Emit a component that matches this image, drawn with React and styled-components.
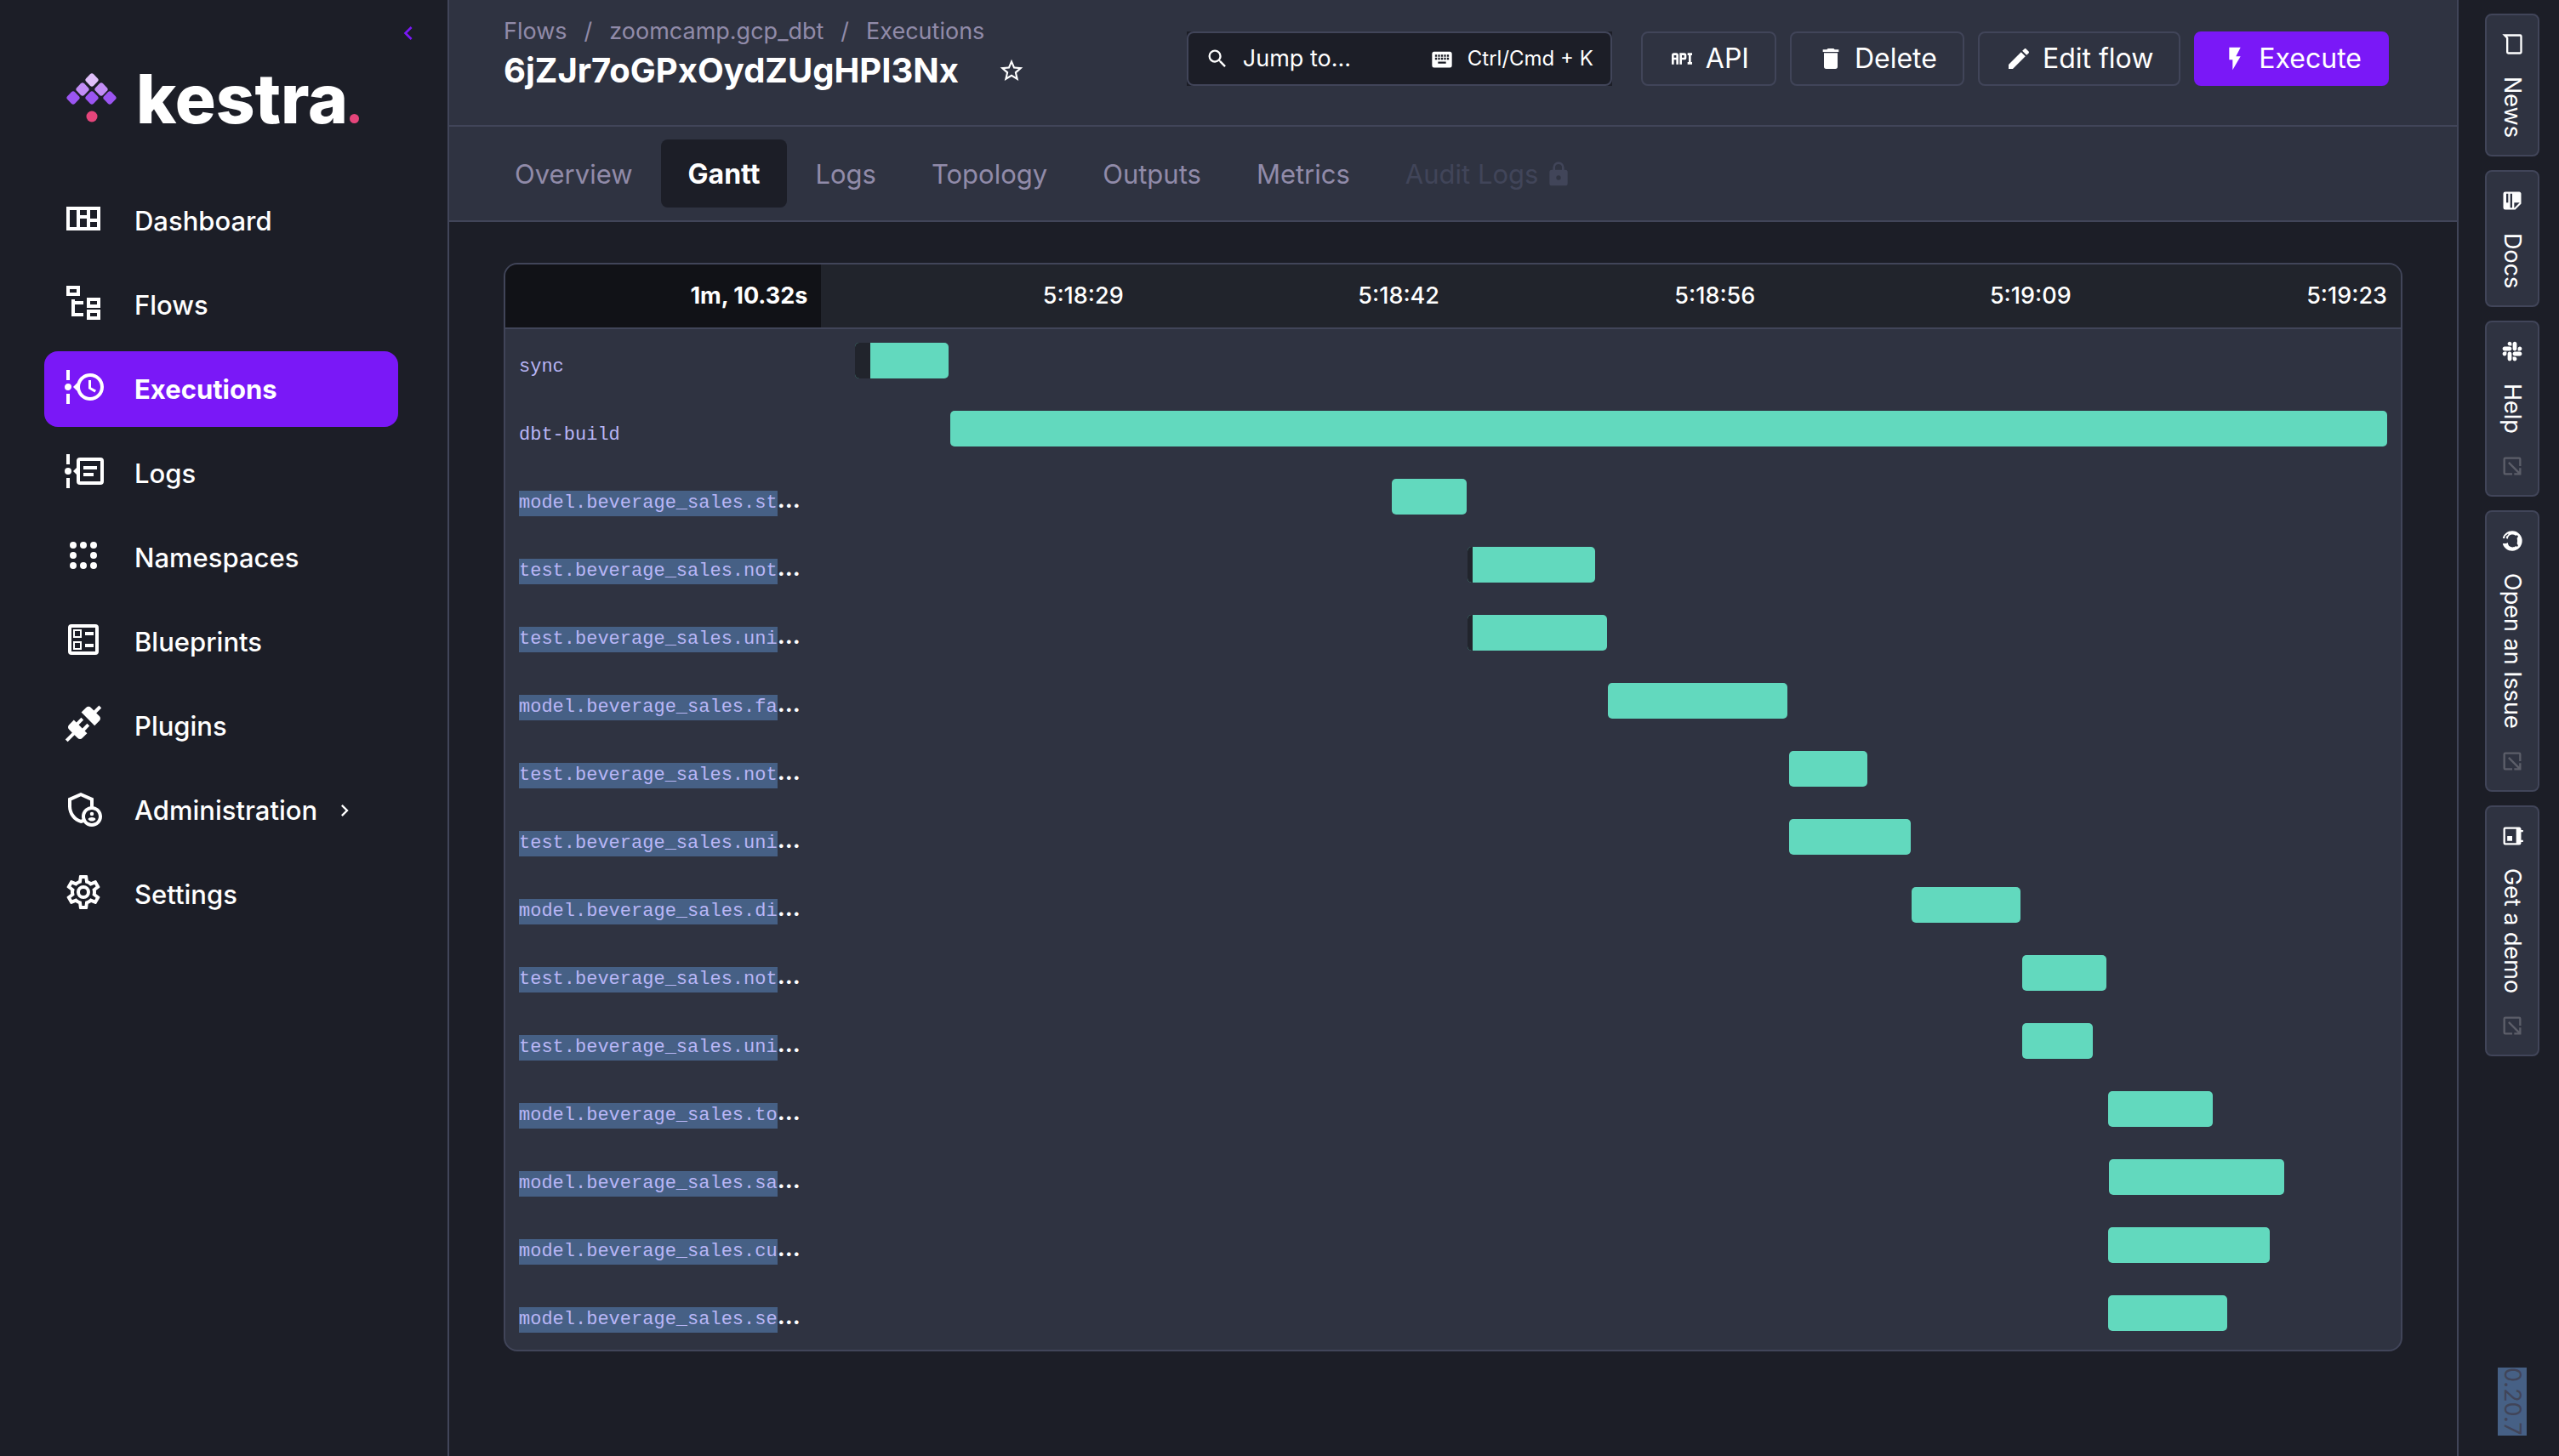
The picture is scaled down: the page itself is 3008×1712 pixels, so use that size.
import React from "react";
import styled, { createGlobalStyle, css } from "styled-components";
import { MdOutlineAdminPanelSettings } from "react-icons/md";
import { FaSlack } from "react-icons/fa";

const color = {
  page: "#1c1e27",
  panel: "#2f3341",
  border: "#414559",
  muted: "#918ba9",
  text: "#ffffff",
  primary: "#7a18f7",
  success: "#62d9be",
  pending: "#21242c",
  headFirst: "#111217",
  code: "#b9b6f6",
  selection: "#466085",
  faint: "#5c5e69",
};

const GlobalStyle = createGlobalStyle`
  *, *::before, *::after { box-sizing: border-box; }
  body {
    margin: 0;
    background: ${color.page};
    color: ${color.text};
    font-family: Inter, "Liberation Sans", sans-serif;
    font-size: 27px;
  }
  a { color: inherit; text-decoration: none; }
  button, input { font-family: inherit; }
`;

/* ---------- icons ---------- */

const paths = {
  dashboard:
    "M2 5H22V19H2V5M4 7V17H8V7H4M10 7V10H14V7H10M10 12V17H14V12H10M16 7V12H20V7H16M16 14V17H20V14H16Z",
  flows:
    "M12 13H7v5h5v2H5V10h2v1h5v2M8 4v2H4V4h4m2-2H2v6h8V2m10 9v2h-4v-2h4m2-2h-8v6h8V9m-2 9v2h-4v-2h4m2-2h-8v6h8v-6z",
  executions:
    "M4 2v6H2V2h2M2 22v-6h2v6H2m3-10c0 1.11-.89 2-2 2a2 2 0 0 1-2-2c0-1.11.89-2 2-2a2 2 0 0 1 2 2m11-8c4.42 0 8 3.58 8 8s-3.58 8-8 8c-3.6 0-6.65-2.38-7.65-5.65L6 12l2.35-2.35C9.35 6.38 12.4 4 16 4m0 2c-3.31 0-6 2.69-6 6s2.69 6 6 6 6-2.69 6-6-2.69-6-6-6m-1 2h1.5v4.2l3 1.7-.8 1.3L15 13V8z",
  logs:
    "M4 2v6H2V2h2M2 22v-6h2v6H2m3-10a2 2 0 0 1-2 2 2 2 0 0 1-2-2 2 2 0 0 1 2-2 2 2 0 0 1 2 2m17-8H10a2 2 0 0 0-2 2v4l-2 2 2 2v4a2 2 0 0 0 2 2h12a2 2 0 0 0 2-2V6a2 2 0 0 0-2-2m0 14H10V6h12v12M12 9h8v2h-8V9m0 4h6v2h-6v-2z",
  namespaces:
    "M6 4a2 2 0 1 0 0 4 2 2 0 0 0 0-4m6 0a2 2 0 1 0 0 4 2 2 0 0 0 0-4m6 0a2 2 0 1 0 0 4 2 2 0 0 0 0-4M6 10a2 2 0 1 0 0 4 2 2 0 0 0 0-4m12 0a2 2 0 1 0 0 4 2 2 0 0 0 0-4M6 16a2 2 0 1 0 0 4 2 2 0 0 0 0-4m6 0a2 2 0 1 0 0 4 2 2 0 0 0 0-4m6 0a2 2 0 1 0 0 4 2 2 0 0 0 0-4z",
  blueprints:
    "M13 7.5h5v2h-5v-2m0 7h5v2h-5v-2M19 3H5a2 2 0 0 0-2 2v14a2 2 0 0 0 2 2h14a2 2 0 0 0 2-2V5a2 2 0 0 0-2-2m0 16H5V5h14v14M11 6H6v5h5V6m-1 4H7V7h3v3m1 3H6v5h5v-5m-1 4H7v-3h3v3z",
  plugins:
    "M21.4 7.5c.8.8.8 2.1 0 2.8l-2.8 2.8-7.8-7.8 2.8-2.8c.8-.8 2.1-.8 2.8 0l1.8 1.8 3-3 1.4 1.4-3 3 1.8 1.8m-5.8 5.8l-1.4-1.4-2.8 2.8-2.1-2.1 2.8-2.8-1.4-1.4-2.8 2.8-1.5-1.4-2.8 2.8c-.8.8-.8 2.1 0 2.8l1.8 1.8-4 4 1.4 1.4 4-4 1.8 1.8c.8.8 2.1.8 2.8 0l2.8-2.8-1.4-1.4 2.8-2.9z",
  settings:
    "M12 8a4 4 0 0 1 4 4 4 4 0 0 1-4 4 4 4 0 0 1-4-4 4 4 0 0 1 4-4m0 2a2 2 0 0 0-2 2 2 2 0 0 0 2 2 2 2 0 0 0 2-2 2 2 0 0 0-2-2m-2 12c-.25 0-.46-.18-.5-.42l-.37-2.65c-.63-.25-1.17-.59-1.69-.99l-2.49 1.01c-.22.08-.49 0-.61-.22l-2-3.46a.493.493 0 0 1 .12-.64l2.11-1.66L4.5 12l.07-1-2.11-1.63a.493.493 0 0 1-.12-.64l2-3.46c.12-.22.39-.31.61-.22l2.49 1c.52-.39 1.06-.73 1.69-.98l.37-2.65c.04-.24.25-.42.5-.42h4c.25 0 .46.18.5.42l.37 2.65c.63.25 1.17.59 1.69.98l2.49-1c.22-.09.49 0 .61.22l2 3.46c.13.22.07.49-.12.64L19.43 11l.07 1-.07 1 2.11 1.63c.19.15.25.42.12.64l-2 3.46c-.12.22-.39.31-.61.22l-2.49-1c-.52.39-1.06.73-1.69.98l-.37 2.65c-.04.24-.25.42-.5.42h-4m1.25-18l-.37 2.61c-1.2.25-2.26.89-3.03 1.78L5.44 7.35l-.75 1.3L6.8 10.2a5.55 5.55 0 0 0 0 3.6l-2.12 1.56.75 1.3 2.43-1.04c.77.88 1.82 1.52 3.01 1.76l.37 2.62h1.52l.37-2.61c1.19-.25 2.24-.89 3.01-1.77l2.43 1.04.75-1.3-2.12-1.55c.4-1.17.4-2.44 0-3.61l2.11-1.55-.75-1.3-2.41 1.04a5.42 5.42 0 0 0-3.03-1.77L12.75 4h-1.5z",
  chevronLeft: "M15.41 16.58L10.83 12l4.58-4.59L14 6l-6 6 6 6 1.41-1.42z",
  chevronRight: "M8.59 16.58L13.17 12 8.59 7.41 10 6l6 6-6 6-1.41-1.42z",
  api:
    "M7 7H5a2 2 0 0 0-2 2v8h2v-4h2v4h2V9a2 2 0 0 0-2-2m0 4H5V9h2m7-2h-4v10h2v-4h2a2 2 0 0 0 2-2V9a2 2 0 0 0-2-2m0 4h-2V9h2m6 0v6h1v2h-4v-2h1V9h-1V7h4v2h-1z",
  trash:
    "M19 4h-3.5l-1-1h-5l-1 1H5v2h14M6 19a2 2 0 0 0 2 2h8a2 2 0 0 0 2-2V7H6v12z",
  pencil:
    "M20.71 7.04c.39-.39.39-1.04 0-1.41l-2.34-2.34c-.37-.39-1.02-.39-1.41 0l-1.84 1.83 3.75 3.75M3 17.25V21h3.75L17.81 9.93l-3.75-3.75L3 17.25z",
  flash: "M7 2v11h3v9l7-12h-4l4-8H7z",
  star:
    "M12 15.39l-3.76 2.27.99-4.28-3.32-2.88 4.38-.37L12 6.09l1.71 4.04 4.38.37-3.32 2.88.99 4.28M22 9.24l-7.19-.61L12 2 9.19 8.63 2 9.24l5.45 4.73L5.82 21 12 17.27 18.18 21l-1.64-7.03L22 9.24z",
  lock:
    "M12 17a2 2 0 0 0 2-2 2 2 0 0 0-2-2 2 2 0 0 0-2 2 2 2 0 0 0 2 2m6-9a2 2 0 0 1 2 2v10a2 2 0 0 1-2 2H6a2 2 0 0 1-2-2V10a2 2 0 0 1 2-2h1V6a5 5 0 0 1 5-5 5 5 0 0 1 5 5v2h1m-6-5a3 3 0 0 0-3 3v2h6V6a3 3 0 0 0-3-3z",
  magnify:
    "M9.5 3A6.5 6.5 0 0 1 16 9.5c0 1.61-.59 3.09-1.56 4.23l.27.27h.79l5 5-1.5 1.5-5-5v-.79l-.27-.27A6.516 6.516 0 0 1 9.5 16 6.5 6.5 0 0 1 3 9.5 6.5 6.5 0 0 1 9.5 3m0 2C7 5 5 7 5 9.5S7 14 9.5 14 14 12 14 9.5 12 5 9.5 5z",
  keyboard:
    "M19 10h-2V8h2m0 5h-2v-2h2m-3-1h-2V8h2m0 5h-2v-2h2m0 6H8v-2h8m-9-5H5V8h2m0 5H5v-2h2m1 0h2v2H8m0-5h2v2H8m3 1h2v2h-2m0-5h2v2h-2m9-5H4c-1.11 0-2 .89-2 2v12a2 2 0 0 0 2 2h16a2 2 0 0 0 2-2V7c0-1.11-.9-2-2-2z",
  message:
    "M20 2H4a2 2 0 0 0-2 2v18l4-4h14a2 2 0 0 0 2-2V4a2 2 0 0 0-2-2m0 14H5.17L4 17.17V4h16v12z",
  note:
    "M14 10h5.5L14 4.5V10M5 3h10l6 6v10a2 2 0 0 1-2 2H5a2 2 0 0 1-2-2V5c0-1.11.89-2 2-2m0 9v2h14v-2H5m0 4v2h9v-2H5z",
  github:
    "M12 2A10 10 0 0 0 2 12c0 4.42 2.87 8.17 6.84 9.5.5.08.66-.23.66-.5v-1.69c-2.77.6-3.36-1.34-3.36-1.34-.46-1.16-1.11-1.47-1.11-1.47-.91-.62.07-.6.07-.6 1 .07 1.53 1.03 1.53 1.03.87 1.52 2.34 1.07 2.91.83.09-.65.35-1.09.63-1.34-2.22-.25-4.55-1.11-4.55-4.92 0-1.11.38-2 1.03-2.71-.1-.25-.45-1.29.1-2.64 0 0 .84-.27 2.75 1.02.79-.22 1.65-.33 2.5-.33.85 0 1.71.11 2.5.33 1.91-1.29 2.75-1.02 2.75-1.02.55 1.35.2 2.39.1 2.64.65.71 1.03 1.6 1.03 2.71 0 3.82-2.34 4.66-4.57 4.91.36.31.69.92.69 1.85V21c0 .27.16.59.67.5C19.14 20.16 22 16.42 22 12A10 10 0 0 0 12 2z",
  calendar:
    "M19 19H5V8h14m-3-7v2H8V1H6v2H5c-1.11 0-2 .89-2 2v14a2 2 0 0 0 2 2h14a2 2 0 0 0 2-2V5a2 2 0 0 0-2-2h-1V1m-1 11h-5v5h5v-5z",
  openInNew:
    "M14 3v2h3.59l-9.83 9.83 1.41 1.41L19 6.41V10h2V3m-2 16H5V5h7V3H5a2 2 0 0 0-2 2v14a2 2 0 0 0 2 2h14a2 2 0 0 0 2-2v-7h-2v7z",
};

const Svg = styled.svg`
  display: block;
  flex: none;
  width: ${(p) => p.$size}px;
  height: ${(p) => p.$size}px;
  fill: currentColor;
`;

const Icon = ({ name, size = 32 }) => (
  <Svg viewBox="0 0 24 24" $size={size} aria-hidden="true">
    <path fillRule="evenodd" d={paths[name]} />
  </Svg>
);

/* ---------- shell ---------- */

const Shell = styled.div`
  display: grid;
  grid-template-columns: 528px minmax(0, 1fr) 120px;
  min-height: 100vh;
`;

const Sidebar = styled.aside`
  border-right: 2px solid ${color.border};
`;

const CollapseRow = styled.div`
  display: flex;
  justify-content: flex-end;
  padding: 23px 30px 0 0;
`;

const IconButton = styled.button`
  display: flex;
  padding: 0;
  border: 0;
  background: none;
  color: ${(p) => p.$color || color.text};
  cursor: pointer;
`;

const Brand = styled.a`
  display: flex;
  align-items: center;
  gap: 22px;
  height: 88px;
  margin: 17px 0 55px 78px;
`;

const Mark = styled.svg`
  display: block;
  width: 60px;
  height: 60px;
`;

const Wordmark = styled.span`
  display: flex;
  align-items: baseline;
  gap: 2px;
  font-size: 80px;
  font-weight: 800;
  line-height: 88px;
`;

const BrandDot = styled.i`
  width: 11px;
  height: 11px;
  border-radius: 50%;
  background: #e5457b;
`;

const diamonds = [
  [30, 8, "#e0c0fa"],
  [19, 19, "#c28df6"],
  [41, 19, "#c28df6"],
  [8, 29, "#9b55f1"],
  [30, 29, "#9b55f1"],
  [51, 29, "#9b55f1"],
];

const Logo = () => (
  <Brand href="#dashboard" aria-label="kestra">
    <Mark viewBox="0 0 60 60" aria-hidden="true">
      {diamonds.map(([x, y, fill]) => (
        <rect
          key={`${x}-${y}`}
          x={x - 6.2}
          y={y - 6.2}
          width="12.4"
          height="12.4"
          rx="3"
          fill={fill}
          transform={`rotate(45 ${x} ${y})`}
        />
      ))}
      <circle cx="30" cy="51" r="6.5" fill="#e5457b" />
    </Mark>
    <Wordmark>
      kestra
      <BrandDot />
    </Wordmark>
  </Brand>
);

const Nav = styled.nav`
  display: flex;
  flex-direction: column;
  gap: 10px;
  padding: 0 58px 0 52px;
`;

const NavLink = styled.a`
  display: flex;
  align-items: center;
  height: 89px;
  padding: 0 22px;
  border-radius: 16px;
  font-size: 31px;
  font-weight: 500;
  line-height: 40px;
  ${(p) =>
    p.$active &&
    css`
      background: ${color.primary};
      font-weight: 700;
    `}
`;

const NavIcon = styled.span`
  margin: 0 36px 5px 0;
`;

const NavChevron = styled.span`
  margin-left: 18px;
`;

const navItems = [
  { label: "Dashboard", icon: "dashboard" },
  { label: "Flows", icon: "flows" },
  { label: "Executions", icon: "executions", active: true },
  { label: "Logs", icon: "logs" },
  { label: "Namespaces", icon: "namespaces" },
  { label: "Blueprints", icon: "blueprints" },
  { label: "Plugins", icon: "plugins" },
  { label: "Administration", admin: true, expandable: true },
  { label: "Settings", icon: "settings" },
];

/* ---------- header ---------- */

const Main = styled.main`
  min-width: 0;
`;

const Header = styled.header`
  display: flex;
  justify-content: space-between;
  gap: 32px;
  height: 149px;
  padding: 17px 80px 0 64px;
  background: ${color.panel};
  border-bottom: 2px solid ${color.border};
`;

const Crumbs = styled.nav`
  display: flex;
  gap: 20px;
  color: ${color.muted};
  font-size: 27px;
  line-height: 40px;
`;

const TitleRow = styled.div`
  display: flex;
  align-items: center;
  gap: 46px;
`;

const Title = styled.h1`
  margin: 0;
  font-size: 40px;
  font-weight: 700;
  line-height: 52px;
`;

const Actions = styled.div`
  display: flex;
  gap: 16px;
  height: 64px;
  margin-top: 20px;
`;

const SearchBox = styled.label`
  width: 500px;
  margin-right: 18px;
  background: ${color.page};
`;

const SearchInner = styled.span`
  display: flex;
  align-items: center;
  gap: 16px;
  height: 64px;
  padding: 0 20px;
  border: 2px solid ${color.border};
  border-radius: 8px;
`;

const SearchInput = styled.input`
  flex: 1;
  min-width: 0;
  padding: 0;
  border: 0;
  outline: 0;
  background: none;
  color: ${color.text};
  font-size: 27px;
  line-height: 40px;
  &::placeholder {
    color: ${color.text};
    opacity: 1;
  }
`;

const Shortcut = styled.span`
  font-size: 24px;
  line-height: 40px;
`;

const ActionButton = styled.button`
  display: flex;
  align-items: center;
  gap: 12px;
  height: 64px;
  padding: 0 30px;
  border: 2px solid ${(p) => (p.$primary ? color.primary : color.border)};
  border-radius: 8px;
  background: ${(p) => (p.$primary ? color.primary : color.panel)};
  color: ${color.text};
  font-size: 32px;
  line-height: 40px;
  cursor: pointer;
`;

const Tabs = styled.nav`
  display: flex;
  align-items: center;
  gap: 1px;
  height: 112px;
  padding-left: 45px;
  background: ${color.panel};
  border-bottom: 2px solid ${color.border};
`;

const Tab = styled.a`
  display: flex;
  align-items: center;
  gap: 8px;
  height: 80px;
  padding: 2px 32px 0;
  border-radius: 8px;
  color: ${(p) => (p.$disabled ? color.border : color.muted)};
  font-size: 31px;
  line-height: 40px;
  ${(p) =>
    p.$active &&
    css`
      background: ${color.page};
      color: ${color.text};
      font-size: 32px;
      font-weight: 700;
    `}
`;

/* ---------- gantt ---------- */

const Content = styled.section`
  padding: 48px 64px;
`;

const Card = styled.div`
  overflow: hidden;
  border: 2px solid ${color.border};
  border-radius: 16px;
  background: ${color.panel};
`;

const Table = styled.table`
  width: 100%;
  table-layout: fixed;
  border-spacing: 0;
`;

const HeadCell = styled.th`
  height: 76px;
  padding: 0 16px;
  background: ${(p) => (p.$first ? color.headFirst : color.pending)};
  border-bottom: 2px solid ${color.border};
  font-size: 27px;
  font-weight: ${(p) => (p.$first ? 700 : 500)};
  line-height: 40px;
  text-align: right;
`;

const TaskCell = styled.th`
  height: 80px;
  padding: 26px 0 0 16px;
  vertical-align: top;
  font-size: 27px;
  font-weight: 700;
  line-height: 30px;
  text-align: left;
  white-space: nowrap;
`;

const TaskName = styled.code`
  display: inline-block;
  height: 30px;
  background: ${(p) => (p.$selected ? color.selection : "none")};
  color: ${color.code};
  font-family: "Liberation Mono", "DejaVu Sans Mono", monospace;
  font-size: 22px;
  font-weight: 400;
  line-height: 30px;
`;

const TrackCell = styled.td`
  padding: 16px 16px 0;
  vertical-align: top;
`;

const Bar = styled.div`
  display: flex;
  height: 42px;
  overflow: hidden;
  border-radius: 5px;
  background: ${color.success};
`;

const Pending = styled.span`
  background: ${color.pending};
`;

const ticks = ["5:18:29", "5:18:42", "5:18:56", "5:19:09", "5:19:23"];

/* start and end are shares of the time line, pending is a share of the bar */
const tasks = [
  { name: "sync", start: 1.3, end: 7.33, pending: 16.4 },
  { name: "dbt-build", start: 7.42, end: 100 },
  { name: "model.beverage_sales.st", cut: true, start: 35.88, end: 40.7 },
  { name: "test.beverage_sales.not", cut: true, start: 40.76, end: 48.98, pending: 4 },
  { name: "test.beverage_sales.uni", cut: true, start: 40.76, end: 49.75, pending: 3.7 },
  { name: "model.beverage_sales.fa", cut: true, start: 49.79, end: 61.36 },
  { name: "test.beverage_sales.not", cut: true, start: 61.45, end: 66.51 },
  { name: "test.beverage_sales.uni", cut: true, start: 61.45, end: 69.31 },
  { name: "model.beverage_sales.di", cut: true, start: 69.36, end: 76.38 },
  { name: "test.beverage_sales.not", cut: true, start: 76.48, end: 81.91 },
  { name: "test.beverage_sales.uni", cut: true, start: 76.48, end: 81.04 },
  { name: "model.beverage_sales.to", cut: true, start: 82, end: 88.77 },
  { name: "model.beverage_sales.sa", cut: true, start: 82.07, end: 93.37 },
  { name: "model.beverage_sales.cu", cut: true, start: 82.02, end: 92.44 },
  { name: "model.beverage_sales.se", cut: true, start: 82.02, end: 89.7 },
];

const Gantt = () => (
  <Card>
    <Table>
      <thead>
        <tr>
          <HeadCell $first scope="col">1m, 10.32s</HeadCell>
          {ticks.map((t) => (
            <HeadCell key={t} scope="col">{t}</HeadCell>
          ))}
        </tr>
      </thead>
      <tbody>
        {tasks.map((task, i) => (
          <tr key={i}>
            <TaskCell scope="row">
              <TaskName $selected={task.cut}>{task.name}</TaskName>
              {task.cut && "..."}
            </TaskCell>
            <TrackCell colSpan={ticks.length}>
              <Bar
                style={{
                  marginLeft: `${task.start}%`,
                  width: `${task.end - task.start}%`,
                }}
              >
                {task.pending && <Pending style={{ width: `${task.pending}%` }} />}
              </Bar>
            </TrackCell>
          </tr>
        ))}
      </tbody>
    </Table>
  </Card>
);

/* ---------- right rail ---------- */

const Rail = styled.aside`
  display: flex;
  flex-direction: column;
  align-items: center;
  gap: 16px;
  padding: 16px 0 24px 8px;
  border-left: 2px solid ${color.border};
`;

const RailButton = styled.button`
  display: flex;
  align-items: center;
  gap: 24px;
  width: 64px;
  padding: 20px 0;
  border: 2px solid ${color.border};
  border-radius: 8px;
  background: ${color.panel};
  color: ${color.text};
  font-size: 27px;
  line-height: 34px;
  writing-mode: vertical-rl;
  cursor: pointer;
`;

const Turned = styled.span`
  display: flex;
  align-items: center;
  justify-content: center;
  width: 28px;
  height: 28px;
  color: ${(p) => (p.$faint ? color.faint : color.text)};
  writing-mode: horizontal-tb;
  transform: rotate(90deg);
`;

const Version = styled.span`
  margin-top: auto;
  background: ${color.selection};
  color: ${color.border};
  font-size: 27px;
  line-height: 34px;
  writing-mode: vertical-rl;
`;

const railItems = [
  { label: "News", icon: "message" },
  { label: "Docs", icon: "note" },
  { label: "Help", slack: true, external: true },
  { label: "Open an Issue", icon: "github", external: true },
  { label: "Get a demo", icon: "calendar", external: true },
];

export default function App() {
  return (
    <>
      <GlobalStyle />
      <Shell>
        <Sidebar>
          <CollapseRow>
            <IconButton $color={color.primary} aria-label="Collapse menu">
              <Icon name="chevronLeft" />
            </IconButton>
          </CollapseRow>
          <Logo />
          <Nav>
            {navItems.map((item) => (
              <NavLink key={item.label} href={`#${item.label.toLowerCase()}`} $active={item.active}>
                <NavIcon>
                  {item.admin ? (
                    <Svg as={MdOutlineAdminPanelSettings} $size={48} />
                  ) : (
                    <Icon name={item.icon} size={48} />
                  )}
                </NavIcon>
                {item.label}
                {item.expandable && (
                  <NavChevron>
                    <Icon name="chevronRight" size={28} />
                  </NavChevron>
                )}
              </NavLink>
            ))}
          </Nav>
        </Sidebar>

        <Main>
          <Header>
            <div>
              <Crumbs aria-label="Breadcrumb">
                <a href="#flows">Flows</a>
                <span>/</span>
                <a href="#flow">zoomcamp.gcp_dbt</a>
                <span>/</span>
                <a href="#executions">Executions</a>
              </Crumbs>
              <TitleRow>
                <Title>6jZJr7oGPxOydZUgHPI3Nx</Title>
                <IconButton aria-label="Bookmark">
                  <Icon name="star" />
                </IconButton>
              </TitleRow>
            </div>
            <Actions>
              <SearchBox>
                <SearchInner>
                  <Icon name="magnify" size={28} />
                  <SearchInput placeholder="Jump to..." aria-label="Jump to" />
                  <Icon name="keyboard" size={28} />
                  <Shortcut>Ctrl/Cmd + K</Shortcut>
                </SearchInner>
              </SearchBox>
              <ActionButton><Icon name="api" />API</ActionButton>
              <ActionButton><Icon name="trash" />Delete</ActionButton>
              <ActionButton><Icon name="pencil" />Edit flow</ActionButton>
              <ActionButton $primary><Icon name="flash" />Execute</ActionButton>
            </Actions>
          </Header>
          <Tabs aria-label="Execution">
            <Tab href="#overview">Overview</Tab>
            <Tab href="#gantt" $active aria-current="page">Gantt</Tab>
            <Tab href="#tab-logs">Logs</Tab>
            <Tab href="#topology">Topology</Tab>
            <Tab href="#outputs">Outputs</Tab>
            <Tab href="#metrics">Metrics</Tab>
            <Tab href="#audit" $disabled aria-disabled="true">
              Audit Logs
              <Icon name="lock" />
            </Tab>
          </Tabs>
          <Content>
            <Gantt />
          </Content>
        </Main>

        <Rail>
          {railItems.map((item) => (
            <RailButton key={item.label}>
              <Turned>
                {item.slack ? <Svg as={FaSlack} $size={26} /> : <Icon name={item.icon} size={28} />}
              </Turned>
              {item.label}
              {item.external && (
                <Turned $faint>
                  <Icon name="openInNew" size={28} />
                </Turned>
              )}
            </RailButton>
          ))}
          <Version>0.20.7</Version>
        </Rail>
      </Shell>
    </>
  );
}
